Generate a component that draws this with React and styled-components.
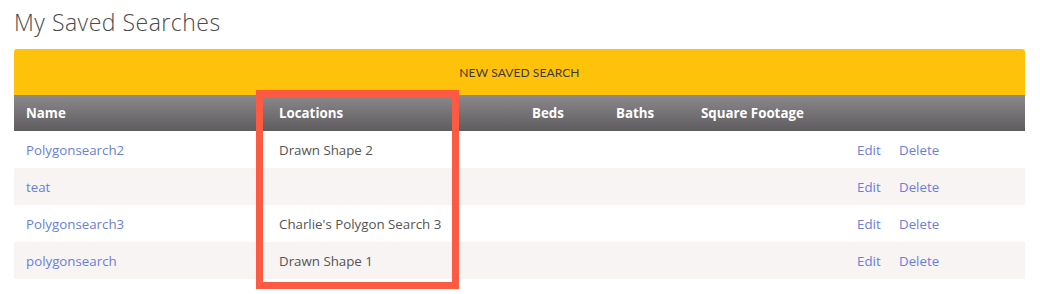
import React from "react";
import styled, { createGlobalStyle } from "styled-components";

const searches = [
    { name: "Polygonsearch2", location: "Drawn Shape 2" },
    { name: "teat", location: "" },
    { name: "Polygonsearch3", location: "Charlie's Polygon Search 3" },
    { name: "polygonsearch", location: "Drawn Shape 1" },
];

const columns = [
    { label: "Name", width: 253 },
    { label: "Locations", width: 253 },
    { label: "Beds", width: 84 },
    { label: "Baths", width: 85 },
    { label: "Square Footage", width: 156 },
    { label: "", width: 42 },
    { label: "", width: 138 },
];

const App = () => {
    return (
        <Page>
            <GlobalStyle />
            <Title>My Saved Searches</Title>
            <NewSearchButton type="button">NEW SAVED SEARCH</NewSearchButton>
            <TableWrap>
                <Table>
                    <colgroup>
                        {columns.map((col, i) => (
                            <col key={i} style={{ width: col.width }} />
                        ))}
                    </colgroup>
                    <thead>
                        <tr>
                            {columns.map((col, i) => (
                                <HeadCell key={i}>{col.label}</HeadCell>
                            ))}
                        </tr>
                    </thead>
                    <tbody>
                        {searches.map((s, i) => (
                            <Row key={i} $striped={i % 2 === 1}>
                                <Cell>
                                    <NameLink href="#">{s.name}</NameLink>
                                </Cell>
                                <Cell>{s.location}</Cell>
                                <Cell />
                                <Cell />
                                <Cell />
                                <Cell>
                                    <ActionLink href="#">Edit</ActionLink>
                                </Cell>
                                <Cell>
                                    <ActionLink href="#">Delete</ActionLink>
                                </Cell>
                            </Row>
                        ))}
                    </tbody>
                </Table>
                <Highlight />
            </TableWrap>
        </Page>
    );
};

const GlobalStyle = createGlobalStyle`
    body {
        margin: 0;
        background: #ffffff;
        font-family: "Open Sans", "Liberation Sans", sans-serif;
    }
`;

const Page = styled.div`
    box-sizing: border-box;
    width: 1040px;
    min-height: 294px;
    padding: 8px 15px 0 14px;
`;

const Title = styled.h1`
    margin: 0 0 12px 0;
    font-size: 23px;
    line-height: 29px;
    font-weight: 300;
    color: #4a4a4a;
    letter-spacing: 0.5px;
`;

const NewSearchButton = styled.button`
    display: block;
    width: 100%;
    height: 46px;
    border: none;
    border-radius: 3px 3px 0 0;
    background: #ffc20a;
    color: #3d3a35;
    font-family: Lato, "Liberation Sans", sans-serif;
    font-size: 12px;
    letter-spacing: 0.1px;
    cursor: pointer;
`;

const TableWrap = styled.div`
    position: relative;
`;

const Table = styled.table`
    width: 100%;
    border-collapse: collapse;
    table-layout: fixed;
`;

const HeadCell = styled.th`
    height: 36px;
    padding: 0 12px;
    text-align: left;
    font-size: 13.3px;
    font-weight: 700;
    color: #ffffff;
    background: linear-gradient(#8b898c, #5e5c5f);
`;

const Row = styled.tr`
    background: ${(props) => (props.$striped ? "#f8f4f4" : "#ffffff")};
`;

const Cell = styled.td`
    height: 37px;
    padding: 0 12px;
    font-size: 13.3px;
    color: #555555;
    white-space: nowrap;
`;

const NameLink = styled.a`
    color: #6a7fd8;
    text-decoration: none;
`;

const ActionLink = styled.a`
    color: #6a7fd8;
    text-decoration: none;
`;

const Highlight = styled.div`
    position: absolute;
    left: 242px;
    top: -5px;
    width: 189px;
    height: 185px;
    border: 7px solid #fd5a44;
    pointer-events: none;
`;

export default App;
